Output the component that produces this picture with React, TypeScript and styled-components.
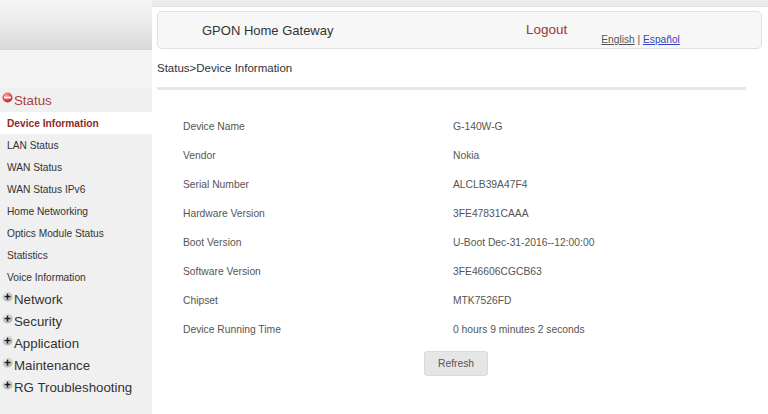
import { Fragment } from "react";
import styled, { createGlobalStyle } from "styled-components";

const GlobalStyle = createGlobalStyle`
  html, body {
    margin: 0;
    padding: 0;
    background: #ffffff;
    font-family: "Liberation Sans", Arial, sans-serif;
  }
`;

const Page = styled.div`
  display: grid;
  grid-template-columns: 152px 1fr;
  width: 768px;
  height: 414px;
  overflow: hidden;
`;

const Side = styled.aside`
  display: flex;
  flex-direction: column;
  background: #f0f0f0;
`;

const LogoArea = styled.div`
  height: 50px;
  background: linear-gradient(180deg, #f6f6f6 0%, #ececec 40%, #d8d8d8 100%);
`;

const SideSpacer = styled.div`
  height: 38px;
  background: #f3f3f3;
`;

const GroupRow = styled.div<{ $open?: boolean }>`
  display: flex;
  align-items: center;
  gap: 1px;
  height: 22px;
  padding-left: 2px;
  font-size: 13.3px;
  color: ${(p) => (p.$open ? "#a8423f" : "#333333")};
  svg {
    margin-top: -5px;
  }
`;

const OpenGroupRow = styled(GroupRow)`
  height: 24px;
`;

const SubItem = styled.div<{ $active?: boolean }>`
  display: flex;
  align-items: center;
  height: 22px;
  padding-left: 7px;
  font-size: 10.2px;
  font-weight: ${(p) => (p.$active ? 700 : 400)};
  color: ${(p) => (p.$active ? "#8e2a2a" : "#333333")};
  background: ${(p) => (p.$active ? "#ffffff" : "transparent")};
`;

const Main = styled.main`
  display: flex;
  flex-direction: column;
  background: #ffffff;
`;

const TopStrip = styled.div`
  height: 6px;
  background: #ececec;
  border-bottom: 1px solid #e2e2e2;
`;

const Header = styled.header`
  display: flex;
  align-items: center;
  height: 36px;
  margin: 4px 6px 0 5px;
  padding-left: 44px;
  background: #f7f7f7;
  border: 1px solid #e0e0e0;
  border-radius: 5px;
`;

const Title = styled.div`
  flex: 0 0 324px;
  font-size: 13px;
  color: #333333;
`;

const Logout = styled.div`
  font-size: 13.5px;
  color: #9e3434;
  margin-top: -2px;
`;

const Langs = styled.div`
  align-self: flex-end;
  margin: 0 0 3px 34px;
  font-size: 10.2px;
  color: #555555;
`;

const LangLink = styled.a<{ $current?: boolean }>`
  color: ${(p) => (p.$current ? "#555555" : "#3344cc")};
  text-decoration: underline;
`;

const Crumb = styled.div`
  height: 38px;
  display: flex;
  align-items: center;
  padding: 0 0 0 5px;
  font-size: 11.5px;
  color: #333333;
`;

const Rule = styled.div`
  height: 3px;
  margin: 0 22px 0 5px;
  background: #e6e6e6;
`;

const InfoBlock = styled.section`
  margin: 22px 13px 0 5px;
`;

const InfoGrid = styled.div`
  display: grid;
  grid-template-columns: 270px 1fr;
  grid-auto-rows: 29px;
  align-items: center;
  padding-left: 26px;
  font-size: 10.3px;
  color: #555555;
`;

const ButtonRow = styled.div`
  display: flex;
  justify-content: center;
  margin-top: 7px;
`;

const Button = styled.button`
  width: 64px;
  height: 25px;
  font-family: inherit;
  font-size: 10.3px;
  color: #555555;
  background: #e6e6e6;
  border: 1px solid #d9d9d9;
  border-radius: 3px;
`;

function ToggleIcon({ open }: { open?: boolean }) {
  const id = open ? "gOpen" : "gClosed";
  return (
    <svg width="11" height="11" viewBox="0 0 11 11">
      <defs>
        <radialGradient id={id} cx="40%" cy="30%" r="75%">
          <stop offset="0%" stopColor={open ? "#ff9a9a" : "#ffffff"} />
          <stop offset="100%" stopColor={open ? "#c41a1a" : "#a8a8a8"} />
        </radialGradient>
      </defs>
      <circle cx="5.5" cy="5.5" r="5" fill={`url(#${id})`} />
      {open ? (
        <rect x="2" y="4.6" width="7" height="1.8" fill="#ffffff" />
      ) : (
        <path d="M2.5 5.5h6M5.5 2.5v6" stroke="#222222" strokeWidth="1.7" />
      )}
    </svg>
  );
}

const statusItems = [
  "Device Information",
  "LAN Status",
  "WAN Status",
  "WAN Status IPv6",
  "Home Networking",
  "Optics Module Status",
  "Statistics",
  "Voice Information",
];

const groups = ["Network", "Security", "Application", "Maintenance", "RG Troubleshooting"];

const info: [string, string][] = [
  ["Device Name", "G-140W-G"],
  ["Vendor", "Nokia"],
  ["Serial Number", "ALCLB39A47F4"],
  ["Hardware Version", "3FE47831CAAA"],
  ["Boot Version", "U-Boot Dec-31-2016--12:00:00"],
  ["Software Version", "3FE46606CGCB63"],
  ["Chipset", "MTK7526FD"],
  ["Device Running Time", "0 hours 9 minutes 2 seconds"],
];

export default function App() {
  return (
    <>
      <GlobalStyle />
      <Page>
        <Side>
          <LogoArea />
          <SideSpacer />
          <OpenGroupRow $open>
            <ToggleIcon open />
            Status
          </OpenGroupRow>
          {statusItems.map((item, i) => (
            <SubItem key={item} $active={i === 0}>
              {item}
            </SubItem>
          ))}
          {groups.map((g) => (
            <GroupRow key={g}>
              <ToggleIcon />
              {g}
            </GroupRow>
          ))}
        </Side>
        <Main>
          <TopStrip />
          <Header>
            <Title>GPON Home Gateway</Title>
            <Logout>Logout</Logout>
            <Langs>
              <LangLink $current>English</LangLink> | <LangLink>Español</LangLink>
            </Langs>
          </Header>
          <Crumb>Status&gt;Device Information</Crumb>
          <Rule />
          <InfoBlock>
            <InfoGrid>
              {info.map(([label, value]) => (
                <Fragment key={label}>
                  <span>{label}</span>
                  <span>{value}</span>
                </Fragment>
              ))}
            </InfoGrid>
            <ButtonRow>
              <Button>Refresh</Button>
            </ButtonRow>
          </InfoBlock>
        </Main>
      </Page>
    </>
  );
}
